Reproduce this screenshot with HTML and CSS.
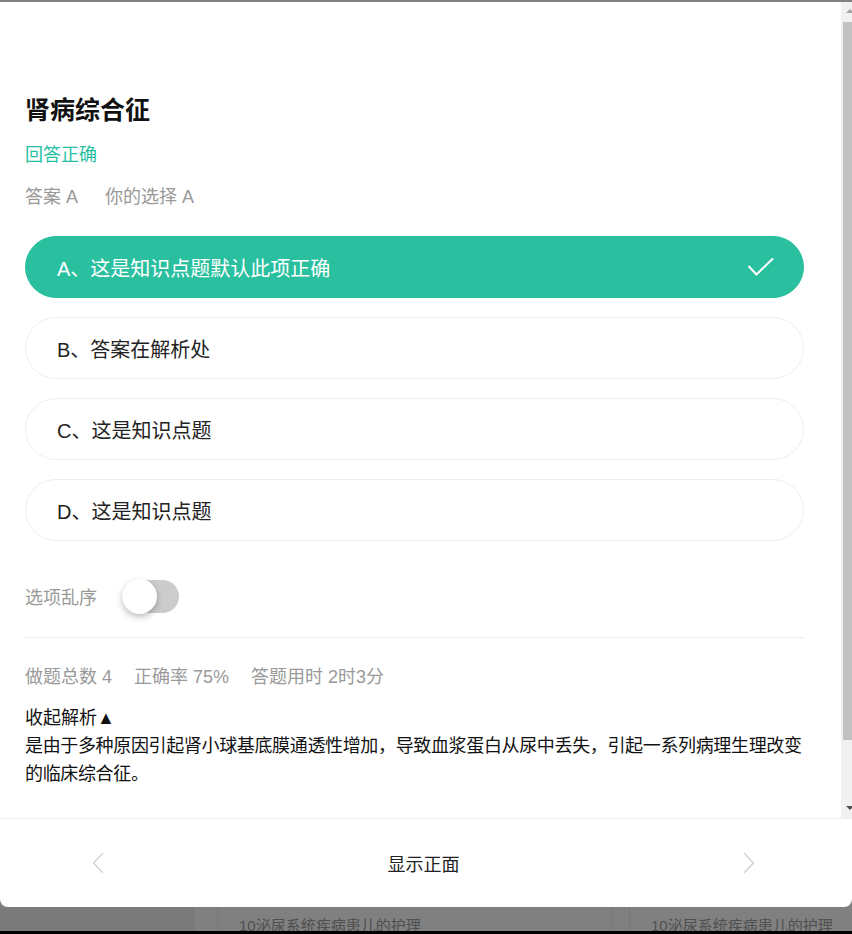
FILE: index.html
```html
<!DOCTYPE html>
<html lang="zh-CN">

<head>
    <meta charset="UTF-8">
    <meta name="viewport" content="width=device-width, initial-scale=1.0">
    <title>肾病综合征</title>
    <link rel="stylesheet" href="styles.css">
</head>

<body>
    <div class="card-modal">
        <div class="card-body">
            <div class="card-content">
                <h1 class="card-title">肾病综合征</h1>
                <p class="result-ok">回答正确</p>
                <div class="answer-info">
                    <span>答案 A</span>
                    <span>你的选择 A</span>
                </div>

                <ul class="option-list">
                    <li class="option option-right">
                        <span>A、这是知识点题默认此项正确</span>
                        <svg class="check" width="28" height="20" viewBox="0 0 28 20">
                            <polyline points="1.5,9 9.5,17.5 26,1.5" fill="none" stroke="#fff" stroke-width="2" />
                        </svg>
                    </li>
                    <li class="option"><span>B、答案在解析处</span></li>
                    <li class="option"><span>C、这是知识点题</span></li>
                    <li class="option"><span>D、这是知识点题</span></li>
                </ul>

                <div class="shuffle-row">
                    <span>选项乱序</span>
                    <div class="switch"><div class="switch-knob"></div></div>
                </div>

                <div class="stats">
                    <span>做题总数 4</span>
                    <span>正确率 75%</span>
                    <span>答题用时 2时3分</span>
                </div>

                <div class="analysis">
                    <div class="analysis-toggle">收起解析▲</div>
                    <p>是由于多种原因引起肾小球基底膜通透性增加，导致血浆蛋白从尿中丢失，引起一系列病理生理改变的临床综合征。</p>
                </div>
            </div>

            <!-- scrollbar of the card body -->
            <div class="scrollbar">
                <div class="sb-btn"><i class="arrow-up"></i></div>
                <div class="sb-track"><div class="sb-thumb"></div></div>
                <div class="sb-btn sb-btn-end"><i class="arrow-down"></i></div>
            </div>
        </div>

        <div class="card-footer">
            <svg width="12" height="22" viewBox="0 0 12 22">
                <polyline points="11,1 1.5,11 11,21" fill="none" stroke="#d0d0d0" stroke-width="1.3" />
            </svg>
            <span class="flip-btn">显示正面</span>
            <svg width="12" height="22" viewBox="0 0 12 22">
                <polyline points="1,1 10.5,11 1,21" fill="none" stroke="#d0d0d0" stroke-width="1.3" />
            </svg>
        </div>
    </div>

    <!-- list behind the overlay -->
    <div class="behind">
        <div class="behind-side"></div>
        <div class="behind-gap"></div>
        <div class="behind-item item-first">10泌尿系统疾病患儿的护理</div>
        <div class="behind-gap gap-narrow"></div>
        <div class="behind-item">10泌尿系统疾病患儿的护理</div>
    </div>
    <div class="window-edge"></div>
</body>

</html>
```

FILE: styles.css
```css
* {
    box-sizing: border-box;
}

html,
body {
    height: 934px;
    overflow: hidden;
}

body {
    margin: 0;
    background-color: #808080;
    font-family: "Liberation Sans", "Noto Sans CJK SC", sans-serif;
    color: #222;
}

.card-modal {
    margin-top: 2px;
    width: 852px;
    height: 905px;
    background-color: #fff;
    border-radius: 0 0 8px 8px;
    display: flex;
    flex-direction: column;
    overflow: hidden;
}

.card-body {
    flex: 1;
    display: flex;
    overflow: hidden;
}

.card-content {
    flex: 1;
    padding: 92px 37px 0 25px;
}

.scrollbar {
    width: 11px;
    display: flex;
    flex-direction: column;
    background-color: #f1f1f1;
    overflow: hidden;
}

.sb-btn {
    height: 20px;
    padding: 7px 0 0 5px;
}

.sb-btn-end {
    height: 12px;
    padding-top: 0;
}

.arrow-up,
.arrow-down {
    display: block;
    width: 0;
    height: 0;
    border-left: 4px solid transparent;
    border-right: 4px solid transparent;
}

.arrow-up {
    border-bottom: 4px solid #a3a3a3;
}

.arrow-down {
    border-top: 4px solid #505050;
}

.sb-track {
    flex: 1;
}

.sb-thumb {
    margin-left: 2px;
    height: 718px;
    background-color: #c1c1c1;
}

.card-title {
    margin: 0;
    font-size: 25px;
    line-height: 32px;
    font-weight: 700;
    color: #111;
}

.result-ok {
    margin: 17px 0 0;
    font-size: 18px;
    line-height: 24px;
    color: #26c09f;
}

.answer-info {
    margin-top: 18px;
    font-size: 18px;
    line-height: 24px;
    color: #999;
    display: flex;
    gap: 27px;
}

.option-list {
    list-style: none;
    margin: 27px 0 0;
    padding: 0;
    display: flex;
    flex-direction: column;
    gap: 19px;
}

.option {
    height: 62px;
    padding: 0 28px 0 31px;
    border: 1px solid #eee;
    border-radius: 31px;
    display: flex;
    align-items: center;
    justify-content: space-between;
    font-size: 20px;
    color: #222;
}

.option-right {
    background-color: #2abf9f;
    border-color: #2abf9f;
    color: #fff;
}

.shuffle-row {
    margin-top: 37px;
    height: 36px;
    display: flex;
    align-items: center;
    gap: 25px;
    font-size: 18px;
    color: #999;
}

.switch {
    position: relative;
    width: 57px;
    height: 33px;
    border-radius: 17px;
    background-color: #ccc;
}

.switch-knob {
    position: absolute;
    left: 0;
    top: -1px;
    width: 35px;
    height: 35px;
    border-radius: 50%;
    background-color: #fff;
    box-shadow: 0 3px 6px rgba(0, 0, 0, 0.25);
}

.stats {
    margin-top: 23px;
    padding-top: 27px;
    border-top: 1px solid #eee;
    display: flex;
    gap: 22px;
    font-size: 18px;
    line-height: 24px;
    color: #999;
}

.analysis {
    margin-top: 15px;
    font-size: 18px;
    line-height: 28px;
    color: #111;
}

.analysis p {
    margin: 0;
    letter-spacing: -0.35px;
}

.card-footer {
    height: 89px;
    flex-shrink: 0;
    border-top: 1px solid #eee;
    display: flex;
    align-items: center;
    justify-content: space-between;
    padding: 0 97px 0 92px;
}

.flip-btn {
    font-size: 18px;
    color: #222;
}

.behind {
    height: 24px;
    display: flex;
}

.behind-side {
    width: 193px;
    background-color: #7b7b7b;
}

.behind-gap {
    width: 25px;
    border-left: 1px solid #777;
    border-right: 1px solid #777;
}

.gap-narrow {
    width: 19px;
}

.behind-item {
    flex: 1;
    padding: 9px 0 0 21px;
    font-size: 15px;
    line-height: 20px;
    color: #4f4f4f;
    white-space: nowrap;
    overflow: hidden;
}

.item-first {
    flex: 0 0 393px;
}

.window-edge {
    height: 3px;
    background-color: #000;
}
```
